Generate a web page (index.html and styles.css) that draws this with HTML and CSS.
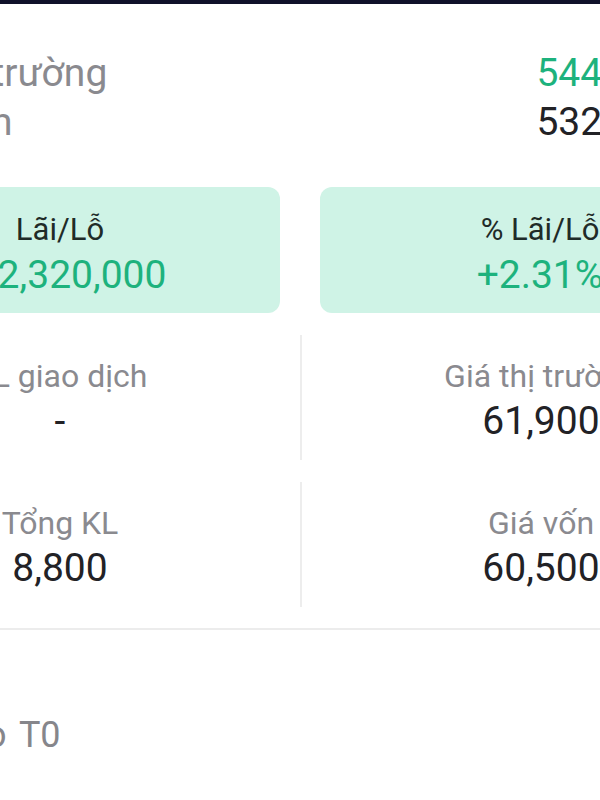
FILE: index.html
```html
<!DOCTYPE html>
<html lang="vi">
<head>
  <meta charset="UTF-8" />
  <title>Danh mục - Chi tiết mã</title>
  <meta name="viewport" content="width=device-width, initial-scale=1.0" />
  <link rel="stylesheet" href="styles.css">
</head>
<body>

<div class="topbar"></div>

<div class="screen">
  <div class="summary">
    <div class="summary-row">
      <span class="summary-label">Giá trị thị trường</span>
      <span class="value up">544,720,000</span>
    </div>
    <div class="summary-row">
      <span class="summary-label cost">Giá trị vốn</span>
      <span class="value">532,400,000</span>
    </div>
  </div>

  <div class="cards">
    <div class="card">
      <div class="card-label">Lãi/Lỗ</div>
      <div class="card-value">+12,320,000</div>
    </div>
    <div class="card">
      <div class="card-label">% Lãi/Lỗ</div>
      <div class="card-value">+2.31%</div>
    </div>
  </div>

  <div class="stats">
    <div class="stat">
      <div class="label">KL giao dịch</div>
      <div class="value">-</div>
    </div>
    <div class="stat">
      <div class="label">Giá thị trường</div>
      <div class="value">61,900</div>
    </div>
    <div class="stat">
      <div class="label">Tổng KL</div>
      <div class="value">8,800</div>
    </div>
    <div class="stat">
      <div class="label">Giá vốn</div>
      <div class="value">60,500</div>
    </div>
  </div>

  <div class="section">
    <div class="section-title">Lãi/Lỗ theo T0</div>
  </div>
</div>

</body>
</html>
```

FILE: styles.css
```css
* {
  box-sizing: border-box;
}
body {
  margin: 0;
  background: #fff;
  font-family: Roboto, 'Noto Sans', sans-serif;
  color: #1f1f23;
  overflow: hidden;
  height: 800px;
}
.topbar {
  height: 4px;
  background: #10112a;
}
.screen {
  width: 960px;
  margin-left: -180px;
}
.label {
  font-size: 32px;
  color: #8a8a8f;
}
.value {
  font-size: 39px;
  color: #222226;
}
.up {
  color: #1db27d;
}

/* tổng quan */
.summary {
  padding: 46px 31px 0 6px;
}
.summary-row {
  display: flex;
  justify-content: space-between;
  align-items: baseline;
  height: 49px;
}
.summary-label {
  font-size: 39px;
  color: #8a8a8f;
}
.summary-label.cost {
  padding-left: 12px;
}

/* lãi lỗ */
.cards {
  display: grid;
  grid-template-columns: 1fr 1fr;
  gap: 40px;
  padding: 0 20px;
  margin-top: 39px;
}
.card {
  background: #cff3e6;
  border-radius: 12px;
  height: 126px;
  text-align: center;
  padding-top: 23px;
}
.card-label {
  font-size: 31px;
  color: #1f2b28;
  line-height: 40px;
}
.card-value {
  font-size: 39px;
  color: #1db27d;
  line-height: 50px;
}

/* thông số */
.stats {
  display: grid;
  grid-template-columns: 1fr 1fr;
  row-gap: 22px;
  margin-top: 22px;
  padding-bottom: 21px;
  border-bottom: 2px solid #ececec;
}
.stat {
  height: 125px;
  text-align: center;
  padding-top: 21px;
}
.stat:nth-child(2n) {
  border-left: 2px solid #ededed;
}
.stat .label {
  line-height: 40px;
}
.stat .value {
  line-height: 51px;
}

.section {
  padding: 84px 0 0;
}
.section-title {
  font-size: 36px;
  color: #86868b;
  word-spacing: 4px;
}
```
